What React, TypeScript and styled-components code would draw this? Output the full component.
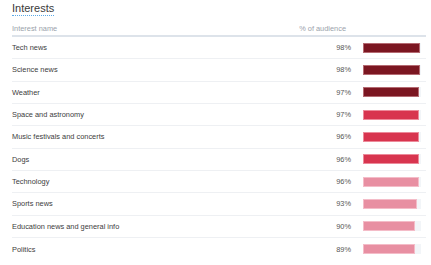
import styled, { createGlobalStyle } from "styled-components";

const GlobalStyle = createGlobalStyle`
  body {
    margin: 0;
    background: #ffffff;
    font-family: "Liberation Sans", Arial, sans-serif;
  }
`;

const Panel = styled.div`
  width: 431px;
  height: 265px;
  box-sizing: border-box;
  padding: 2px 5px 0 12px;
  overflow: hidden;
`;

const Title = styled.h2`
  width: fit-content;
  margin: 0;
  font-size: 11px;
  line-height: 13px;
  font-weight: 400;
  color: #3a3a3a;
  border-bottom: 1px dotted #5aa9e6;
`;

const HeaderRow = styled.div`
  display: grid;
  grid-template-columns: 1fr 60px 75px;
  align-items: center;
  height: 21px;
  padding-top: 6px;
  box-sizing: border-box;
  border-bottom: 2px solid #dde3ea;
  font-size: 7.4px;
  color: #9aa2ab;
`;

const HeaderCell = styled.div<{ $right?: boolean }>`
  text-align: ${(p) => (p.$right ? "right" : "left")};
  padding-right: ${(p) => (p.$right ? "5px" : "0")};
`;

const Row = styled.div`
  display: grid;
  grid-template-columns: 1fr 60px 75px;
  align-items: center;
  height: 22.33px;
  box-sizing: border-box;
  border-bottom: 1px solid #eef0f3;
  font-size: 7.4px;
  color: #3c3c3c;

  &:last-child {
    border-bottom: none;
  }
`;

const Pct = styled.div`
  text-align: right;
  color: #555;
`;

const Track = styled.div`
  margin-left: 12px;
  width: 58px;
  height: 10px;
  background: #f2f5f8;
`;

const Bar = styled.div<{ $color: string; $edge: string }>`
  height: 100%;
  box-sizing: border-box;
  background: ${(p) => p.$color};
  border: 1px solid ${(p) => p.$edge};
`;

const shades = {
  dark: { color: "#7b1621", edge: "#b46a72" },
  mid: { color: "#d8354f", edge: "#ec8a9a" },
  light: { color: "#e88fa2", edge: "#f4bcc8" },
};

const interests: { name: string; pct: number; shade: keyof typeof shades }[] = [
  { name: "Tech news", pct: 98, shade: "dark" },
  { name: "Science news", pct: 98, shade: "dark" },
  { name: "Weather", pct: 97, shade: "dark" },
  { name: "Space and astronomy", pct: 97, shade: "mid" },
  { name: "Music festivals and concerts", pct: 96, shade: "mid" },
  { name: "Dogs", pct: 96, shade: "mid" },
  { name: "Technology", pct: 96, shade: "light" },
  { name: "Sports news", pct: 93, shade: "light" },
  { name: "Education news and general info", pct: 90, shade: "light" },
  { name: "Politics", pct: 89, shade: "light" },
];

export default function App() {
  return (
    <>
      <GlobalStyle />
      <Panel>
        <Title>Interests</Title>
        <HeaderRow>
          <HeaderCell>Interest name</HeaderCell>
          <HeaderCell $right>% of audience</HeaderCell>
          <div />
        </HeaderRow>
        {interests.map((item) => (
          <Row key={item.name}>
            <div>{item.name}</div>
            <Pct>{item.pct}%</Pct>
            <Track>
              <Bar
                $color={shades[item.shade].color}
                $edge={shades[item.shade].edge}
                style={{ width: `${item.pct}%` }}
              />
            </Track>
          </Row>
        ))}
      </Panel>
    </>
  );
}
